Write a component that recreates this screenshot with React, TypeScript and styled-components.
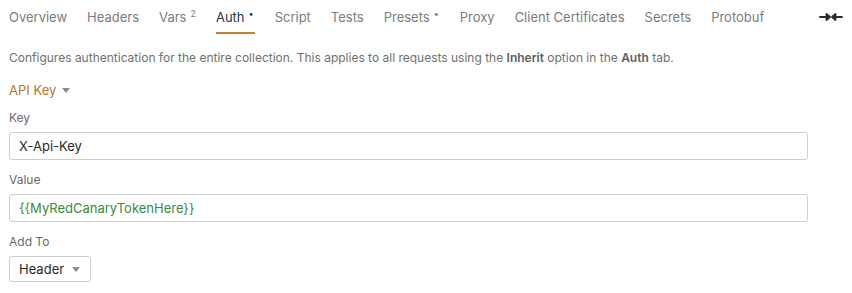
import styled, { createGlobalStyle } from "styled-components";

const GlobalStyle = createGlobalStyle`
  body {
    margin: 0;
    background: #ffffff;
    font-family: Inter, "Noto Sans", sans-serif;
    color: #343434;
  }
`;

const Page = styled.div`
  display: flex;
  flex-direction: column;
  padding: 0 9px;
`;

const TabBar = styled.div`
  display: flex;
  align-items: flex-start;
  height: 34px;
  gap: 20px;
`;

const Tab = styled.div<{ $active?: boolean }>`
  padding-top: 9px;
  height: 34px;
  box-sizing: border-box;
  font-size: 13px;
  color: ${(p) => (p.$active ? "#343434" : "#7c7c7c")};
  border-bottom: 2px solid ${(p) => (p.$active ? "#c7802f" : "transparent")};
  white-space: nowrap;
  sup {
    font-size: 9px;
    margin-left: 4px;
    vertical-align: 5px;
    line-height: 0;
  }
  sup.dot {
    margin-right: 1px;
  }
`;

const CollapseIcon = styled.div`
  margin-left: auto;
  padding-top: 12px;
  display: flex;
`;

const Description = styled.p`
  margin: 16px 0 0;
  font-size: 12px;
  color: #6f6f6f;
  b {
    font-weight: 600;
    color: #5e5e5e;
  }
`;

const ModeSelect = styled.div`
  display: flex;
  align-items: center;
  gap: 6px;
  margin-top: 17px;
  font-size: 13px;
  color: #b8762c;
`;

const Caret = styled.span`
  display: inline-block;
  width: 0;
  height: 0;
  border-left: 4px solid transparent;
  border-right: 4px solid transparent;
  border-top: 5px solid #8a8a8a;
`;

const Field = styled.div`
  display: flex;
  flex-direction: column;
`;

const Label = styled.label`
  font-size: 12px;
  color: #6a6a6a;
  margin-top: 12px;
  margin-bottom: 7px;
`;

const Input = styled.div<{ $variable?: boolean }>`
  width: 799px;
  height: 28px;
  box-sizing: border-box;
  border: 1px solid #cfcfcf;
  border-radius: 3px;
  padding: 0 9px;
  display: flex;
  align-items: center;
  font-size: 13px;
  color: ${(p) => (p.$variable ? "#3a8a40" : "#2a2a2a")};
`;

const SelectBox = styled.div`
  width: 82px;
  height: 26px;
  box-sizing: border-box;
  border: 1px solid #cfcfcf;
  border-radius: 3px;
  padding: 0 9px;
  display: flex;
  align-items: center;
  gap: 8px;
  font-size: 13px;
  color: #2a2a2a;
`;

const tabs: { label: string; sup?: string; active?: boolean }[] = [
  { label: "Overview" },
  { label: "Headers" },
  { label: "Vars", sup: "2" },
  { label: "Auth", sup: "•", active: true },
  { label: "Script" },
  { label: "Tests" },
  { label: "Presets", sup: "•" },
  { label: "Proxy" },
  { label: "Client Certificates" },
  { label: "Secrets" },
  { label: "Protobuf" },
];

export default function App() {
  return (
    <>
      <GlobalStyle />
      <Page>
        <TabBar>
          {tabs.map((t) => (
            <Tab key={t.label} $active={t.active}>
              {t.label}
              {t.sup && <sup className={t.sup === "•" ? "dot" : undefined}>{t.sup}</sup>}
            </Tab>
          ))}
          <CollapseIcon>
            <svg width="24" height="10" viewBox="0 0 24 10" fill="#2b2b2b" stroke="#2b2b2b" strokeWidth="1.8" strokeLinecap="round" strokeLinejoin="round">
              <path d="M1 5h8" fill="none" />
              <path d="M7.5 2l3.5 3-3.5 3z" />
              <path d="M23 5h-8" fill="none" />
              <path d="M16.5 2l-3.5 3 3.5 3z" />
            </svg>
          </CollapseIcon>
        </TabBar>
        <Description>
          Configures authentication for the entire collection. This applies to all requests using the <b>Inherit</b> option in the <b>Auth</b> tab.
        </Description>
        <ModeSelect>
          API Key <Caret />
        </ModeSelect>
        <Field>
          <Label>Key</Label>
          <Input>X-Api-Key</Input>
        </Field>
        <Field>
          <Label>Value</Label>
          <Input $variable>{"{{MyRedCanaryTokenHere}}"}</Input>
        </Field>
        <Field>
          <Label>Add To</Label>
          <SelectBox>
            Header <Caret />
          </SelectBox>
        </Field>
      </Page>
    </>
  );
}
